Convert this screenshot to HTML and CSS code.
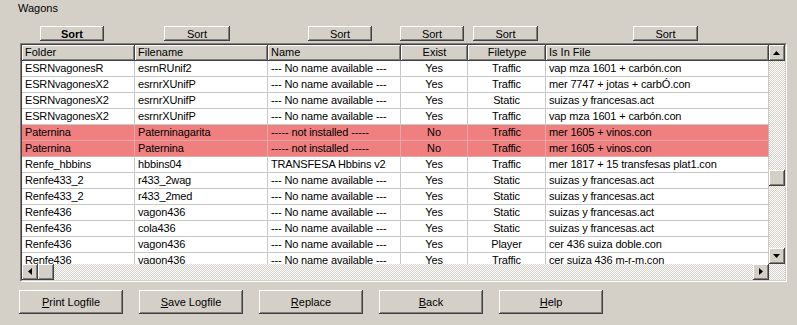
FILE: index.html
```html
<!DOCTYPE html>
<html lang="es">
<head>
  <meta charset="UTF-8" />
  <title>Wagons</title>
  <link rel="stylesheet" href="styles.css">
</head>
<body>
  <div class="window">
    <div class="caption">Wagons</div>

    <div class="sort-bar">
      <button class="btn sort b1 bold">Sort</button>
      <button class="btn sort b2">Sort</button>
      <button class="btn sort b3">Sort</button>
      <button class="btn sort b4">Sort</button>
      <button class="btn sort b5">Sort</button>
      <button class="btn sort b6">Sort</button>
    </div>

    <div class="grid-outer">
      <div class="grid-inner">
        <div class="head">
          <div class="hcell c1">Folder</div>
          <div class="hcell c2">Filename</div>
          <div class="hcell c3">Name</div>
          <div class="hcell c4 center">Exist</div>
          <div class="hcell c5 center">Filetype</div>
          <div class="hcell c6">Is In File</div>
        </div>

        <div class="vscroll">
          <div class="sbtn"><svg width="7" height="4" viewBox="0 0 7 4"><path d="M3.5 0L7 4H0z" fill="#000"/></svg></div>
          <div class="sbtn vthumb"></div>
          <div class="track-fill"></div>
          <div class="sbtn"><svg width="7" height="4" viewBox="0 0 7 4"><path d="M0 0h7L3.5 4z" fill="#000"/></svg></div>
        </div>

        <div class="rows">
          <div class="row"><div class="cell c1">ESRNvagonesR</div><div class="cell c2">esrnRUnif2</div><div class="cell c3">--- No name available ---</div><div class="cell c4 center">Yes</div><div class="cell c5 center">Traffic</div><div class="cell c6">vap mza 1601 + carbón.con</div></div>
          <div class="row"><div class="cell c1">ESRNvagonesX2</div><div class="cell c2">esrnrXUnifP</div><div class="cell c3">--- No name available ---</div><div class="cell c4 center">Yes</div><div class="cell c5 center">Traffic</div><div class="cell c6">mer 7747 + jotas + carbÓ.con</div></div>
          <div class="row"><div class="cell c1">ESRNvagonesX2</div><div class="cell c2">esrnrXUnifP</div><div class="cell c3">--- No name available ---</div><div class="cell c4 center">Yes</div><div class="cell c5 center">Static</div><div class="cell c6">suizas y francesas.act</div></div>
          <div class="row"><div class="cell c1">ESRNvagonesX2</div><div class="cell c2">esrnrXUnifP</div><div class="cell c3">--- No name available ---</div><div class="cell c4 center">Yes</div><div class="cell c5 center">Traffic</div><div class="cell c6">vap mza 1601 + carbón.con</div></div>
          <div class="row missing"><div class="cell c1">Paternina</div><div class="cell c2">Paterninagarita</div><div class="cell c3">----- not installed -----</div><div class="cell c4 center">No</div><div class="cell c5 center">Traffic</div><div class="cell c6">mer 1605 + vinos.con</div></div>
          <div class="row missing"><div class="cell c1">Paternina</div><div class="cell c2">Paternina</div><div class="cell c3">----- not installed -----</div><div class="cell c4 center">No</div><div class="cell c5 center">Traffic</div><div class="cell c6">mer 1605 + vinos.con</div></div>
          <div class="row"><div class="cell c1">Renfe_hbbins</div><div class="cell c2">hbbins04</div><div class="cell c3">TRANSFESA Hbbins v2</div><div class="cell c4 center">Yes</div><div class="cell c5 center">Traffic</div><div class="cell c6">mer 1817 + 15 transfesas plat1.con</div></div>
          <div class="row"><div class="cell c1">Renfe433_2</div><div class="cell c2">r433_2wag</div><div class="cell c3">--- No name available ---</div><div class="cell c4 center">Yes</div><div class="cell c5 center">Static</div><div class="cell c6">suizas y francesas.act</div></div>
          <div class="row"><div class="cell c1">Renfe433_2</div><div class="cell c2">r433_2med</div><div class="cell c3">--- No name available ---</div><div class="cell c4 center">Yes</div><div class="cell c5 center">Static</div><div class="cell c6">suizas y francesas.act</div></div>
          <div class="row"><div class="cell c1">Renfe436</div><div class="cell c2">vagon436</div><div class="cell c3">--- No name available ---</div><div class="cell c4 center">Yes</div><div class="cell c5 center">Static</div><div class="cell c6">suizas y francesas.act</div></div>
          <div class="row"><div class="cell c1">Renfe436</div><div class="cell c2">cola436</div><div class="cell c3">--- No name available ---</div><div class="cell c4 center">Yes</div><div class="cell c5 center">Static</div><div class="cell c6">suizas y francesas.act</div></div>
          <div class="row"><div class="cell c1">Renfe436</div><div class="cell c2">vagon436</div><div class="cell c3">--- No name available ---</div><div class="cell c4 center">Yes</div><div class="cell c5 center">Player</div><div class="cell c6">cer 436 suiza doble.con</div></div>
          <div class="row"><div class="cell c1">Renfe436</div><div class="cell c2">vagon436</div><div class="cell c3">--- No name available ---</div><div class="cell c4 center">Yes</div><div class="cell c5 center">Traffic</div><div class="cell c6">cer suiza 436 m-r-m.con</div></div>
        </div>

        <div class="hscroll">
          <div class="sbtn"><svg width="4" height="7" viewBox="0 0 4 7"><path d="M4 0v7L0 3.5z" fill="#000"/></svg></div>
          <div class="sbtn"></div>
          <div class="track-fill"></div>
          <div class="sbtn"><svg width="4" height="7" viewBox="0 0 4 7"><path d="M0 0l4 3.5L0 7z" fill="#000"/></svg></div>
        </div>
        <div class="corner"></div>
      </div>
    </div>

    <div class="actions">
      <button class="btn action"><u>P</u>rint Logfile</button>
      <button class="btn action"><u>S</u>ave Logfile</button>
      <button class="btn action"><u>R</u>eplace</button>
      <button class="btn action"><u>B</u>ack</button>
      <button class="btn action"><u>H</u>elp</button>
    </div>
  </div>
</body>
</html>
```

FILE: styles.css
```css
body {
  margin: 0;
  padding: 0;
  background-color: #d4d0c8;
  font-family: "Liberation Sans", Arial, sans-serif;
  font-size: 11px;
  color: #000;
}

.window {
  width: 797px;
  height: 325px;
  overflow: hidden;
}

.caption {
  padding-left: 18px;
  margin-top: 2px;
  line-height: 13px;
}

/* buttons, classic raised look */
.btn {
  font-family: inherit;
  font-size: 11px;
  color: #000;
  background-color: #d4d0c8;
  border: none;
  padding: 0;
  box-shadow: inset -1px -1px #404040, inset 1px 1px #fff, inset -2px -2px #808080;
}

.sort-bar {
  display: flex;
  margin-top: 11px;
  height: 15px;
}

.sort {
  width: 64px;
  height: 15px;
  line-height: 14px;
}

.bold { font-weight: bold; }

.b1 { margin-left: 40px; }
.b2 { margin-left: 60px; width: 66px; }
.b3 { margin-left: 78px; }
.b4 { margin-left: 28px; }
.b5 { margin-left: 9px; width: 65px; }
.b6 { margin-left: 95px; width: 65px; }

/* list view */
.grid-outer {
  margin: 2px 0 0 20px;
  width: 765px;
  height: 237px;
  border: 1px solid;
  border-color: #808080 #fff #fff #808080;
}

.grid-inner {
  width: 763px;
  height: 235px;
  border: 1px solid;
  border-color: #404040 #d4d0c8 #d4d0c8 #404040;
  background-color: #fff;
  display: grid;
  grid-template-columns: 747px 16px;
  grid-template-rows: 16px 203px 16px;
}

.head {
  display: flex;
  background-color: #d4d0c8;
}

.hcell {
  height: 16px;
  line-height: 15px;
  padding: 0 3px;
  box-sizing: border-box;
  box-shadow: inset -1px -1px #404040, inset 1px 1px #fff, inset -2px -2px #808080;
  white-space: nowrap;
  overflow: hidden;
}

.c1 { width: 113px; }
.c2 { width: 133px; }
.c3 { width: 133px; }
.c4 { width: 67px; }
.c5 { width: 78px; }
.c6 { width: 223px; }

.center { text-align: center; }

.rows {
  grid-column: 1;
  grid-row: 2;
  overflow: hidden;
}

.row {
  display: flex;
  height: 16px;
  box-sizing: border-box;
  border-bottom: 1px solid #c8c8c8;
}

.row.missing {
  background-color: #f08080;
  border-bottom-color: #e0a8a8;
}

.cell {
  box-sizing: border-box;
  padding: 0 3px;
  line-height: 15px;
  letter-spacing: -0.15px;
  border-right: 1px solid #c8c8c8;
  white-space: nowrap;
  overflow: hidden;
}

.row.missing .cell { border-right-color: #e0a8a8; }

/* scrollbars */
.sbtn {
  width: 16px;
  height: 16px;
  flex: none;
  background-color: #d4d0c8;
  box-shadow: inset -1px -1px #404040, inset 1px 1px #fff, inset -2px -2px #808080;
  display: flex;
  align-items: center;
  justify-content: center;
}

.sbtn svg { margin: -1px 0 0 -1px; }

.track-fill { flex: 1; }

.vscroll {
  grid-column: 2;
  grid-row: 1 / 3;
  display: flex;
  flex-direction: column;
  background: repeating-conic-gradient(#d4d0c8 0 25%, #fff 0 50%) 0 0 / 2px 2px;
}

.vthumb { margin-top: 109px; }

.hscroll {
  grid-column: 1;
  grid-row: 3;
  display: flex;
  background: repeating-conic-gradient(#d4d0c8 0 25%, #fff 0 50%) 0 0 / 2px 2px;
}

.corner {
  grid-column: 2;
  grid-row: 3;
  background: repeating-conic-gradient(#d4d0c8 0 25%, #fff 0 50%) 0 0 / 2px 2px;
}

/* bottom buttons */
.actions {
  display: flex;
  gap: 16px;
  margin: 8px 0 0 19px;
}

.action {
  width: 104px;
  height: 24px;
}
```
